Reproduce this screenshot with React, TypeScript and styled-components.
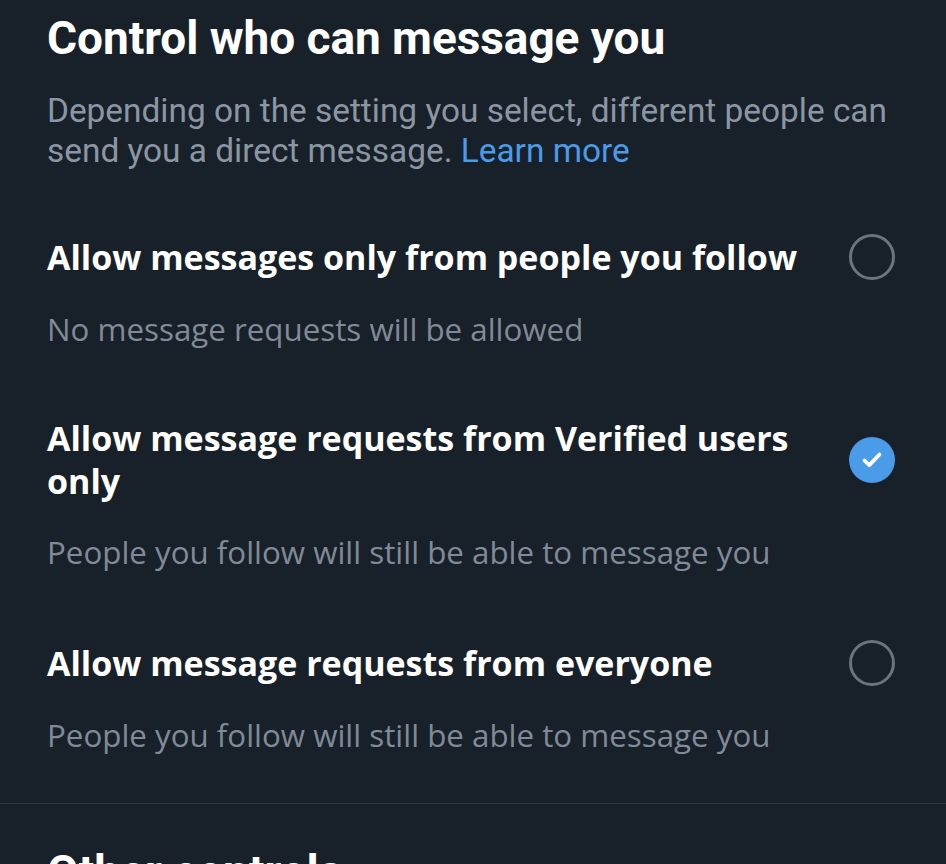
import React from "react";
import styled, { createGlobalStyle } from "styled-components";

const Global = createGlobalStyle`
  html, body { margin: 0; padding: 0; background: #18202a; }
  body { font-family: "Open Sans", "Noto Sans", sans-serif; -webkit-font-smoothing: antialiased; }
`;

const Page = styled.div`
  background: #18202a;
  min-height: 864px;
  overflow: hidden;
`;

const Section = styled.section`
  padding: 12px 51px 0 47px;
`;

const Heading = styled.h1`
  margin: 0;
  font-family: "Roboto", sans-serif;
  font-weight: 700;
  font-size: 46px;
  line-height: 52px;
  letter-spacing: -0.05px;
  color: #ffffff;
`;

const Description = styled.p`
  margin: 27px 0 0;
  font-family: "Roboto", sans-serif;
  font-size: 33.4px;
  line-height: 40px;
  color: #8b96a3;
`;

const Link = styled.a`
  color: #4a9be8;
  text-decoration: none;
`;

const Options = styled.div`
  display: flex;
  flex-direction: column;
  gap: 68px;
  margin-top: 63px;
  padding-bottom: 48px;
`;

const Option = styled.label`
  display: flex;
  flex-direction: column;
  gap: 29px;
  cursor: pointer;
`;

const Row = styled.div`
  display: flex;
  align-items: center;
  justify-content: space-between;
  gap: 4px;
`;

const Title = styled.span`
  font-weight: 700;
  font-size: 34px;
  line-height: 43px;
  color: #ffffff;
`;

const Sub = styled.span`
  font-size: 31.3px;
  line-height: 40px;
  color: #808b97;
`;

const Radio = styled.span<{ $checked?: boolean }>`
  flex: 0 0 auto;
  width: 46px;
  height: 46px;
  box-sizing: border-box;
  border-radius: 50%;
  border: ${(p) => (p.$checked ? "none" : "3px solid #6b747e")};
  background: ${(p) => (p.$checked ? "#4a9be8" : "transparent")};
  display: flex;
  align-items: center;
  justify-content: center;
`;

const Divider = styled.hr`
  margin: 0;
  border: none;
  border-top: 1px solid #2f3742;
`;

const NextHeading = styled.h2`
  margin: 0;
  padding: 42px 47px 0;
  font-family: "Roboto", sans-serif;
  font-weight: 700;
  font-size: 46px;
  line-height: 52px;
  color: #ffffff;
`;

const Check = () => (
  <svg width="24" height="24" viewBox="0 0 24 24" fill="none">
    <path d="M4.5 12.5l4.8 4.6L19.5 6.5" stroke="#fff" strokeWidth="3.8" strokeLinecap="round" strokeLinejoin="round" />
  </svg>
);

const options = [
  { title: "Allow messages only from people you follow", sub: "No message requests will be allowed", checked: false },
  { title: "Allow message requests from Verified users only", sub: "People you follow will still be able to message you", checked: true },
  { title: "Allow message requests from everyone", sub: "People you follow will still be able to message you", checked: false },
];

export default function App() {
  return (
    <Page>
      <Global />
      <Section>
        <Heading>Control who can message you</Heading>
        <Description>
          Depending on the setting you select, different people can send you a direct message.{" "}
          <Link href="#">Learn more</Link>
        </Description>
        <Options>
          {options.map((o) => (
            <Option key={o.title}>
              <Row>
                <Title>{o.title}</Title>
                <Radio $checked={o.checked}>{o.checked && <Check />}</Radio>
              </Row>
              <Sub>{o.sub}</Sub>
            </Option>
          ))}
        </Options>
      </Section>
      <Divider />
      <NextHeading>Other controls</NextHeading>
    </Page>
  );
}
